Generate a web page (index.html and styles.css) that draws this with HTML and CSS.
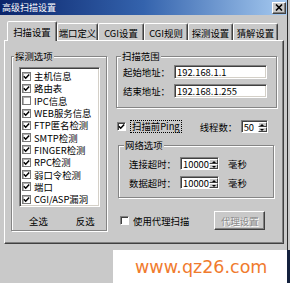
FILE: index.html
```html
<!DOCTYPE html>
<html lang="zh-CN">
<head>
<meta charset="utf-8">
<title>高级扫描设置</title>
<link rel="stylesheet" href="styles.css">
</head>
<body>
<div class="window">
  <div class="titlebar">
    <span class="title">高级扫描设置</span>
    <span class="close"><svg width="8" height="7" viewBox="0 0 8 7"><path d="M1 0.5 L7 6.5 M7 0.5 L1 6.5" stroke="#000" stroke-width="1.6" fill="none"/></svg></span>
  </div>
  <div class="tabs">
    <span class="tab active t1">扫描设置</span>
    <span class="tab t2">端口定义</span>
    <span class="tab t3">CGI设置</span>
    <span class="tab t4">CGI规则</span>
    <span class="tab t5">探测设置</span>
    <span class="tab t6">猜解设置</span>
  </div>
  <div class="panel">
    <div class="group probe">
      <span class="legend">探测选项</span>
      <div class="list">
        <div class="item"><span class="cb"><svg viewBox="0 0 7 7" width="7" height="7"><path d="M0.8 3.2 L2.7 5.2 L6.2 1.4" fill="none" stroke="#000" stroke-width="1.5"/></svg></span><span class="lb">主机信息</span></div>
        <div class="item"><span class="cb"><svg viewBox="0 0 7 7" width="7" height="7"><path d="M0.8 3.2 L2.7 5.2 L6.2 1.4" fill="none" stroke="#000" stroke-width="1.5"/></svg></span><span class="lb">路由表</span></div>
        <div class="item"><span class="cb"></span><span class="lb">IPC信息</span></div>
        <div class="item"><span class="cb"><svg viewBox="0 0 7 7" width="7" height="7"><path d="M0.8 3.2 L2.7 5.2 L6.2 1.4" fill="none" stroke="#000" stroke-width="1.5"/></svg></span><span class="lb">WEB服务信息</span></div>
        <div class="item"><span class="cb"><svg viewBox="0 0 7 7" width="7" height="7"><path d="M0.8 3.2 L2.7 5.2 L6.2 1.4" fill="none" stroke="#000" stroke-width="1.5"/></svg></span><span class="lb">FTP匿名检测</span></div>
        <div class="item"><span class="cb"><svg viewBox="0 0 7 7" width="7" height="7"><path d="M0.8 3.2 L2.7 5.2 L6.2 1.4" fill="none" stroke="#000" stroke-width="1.5"/></svg></span><span class="lb">SMTP检测</span></div>
        <div class="item"><span class="cb"><svg viewBox="0 0 7 7" width="7" height="7"><path d="M0.8 3.2 L2.7 5.2 L6.2 1.4" fill="none" stroke="#000" stroke-width="1.5"/></svg></span><span class="lb">FINGER检测</span></div>
        <div class="item"><span class="cb"><svg viewBox="0 0 7 7" width="7" height="7"><path d="M0.8 3.2 L2.7 5.2 L6.2 1.4" fill="none" stroke="#000" stroke-width="1.5"/></svg></span><span class="lb">RPC检测</span></div>
        <div class="item"><span class="cb"><svg viewBox="0 0 7 7" width="7" height="7"><path d="M0.8 3.2 L2.7 5.2 L6.2 1.4" fill="none" stroke="#000" stroke-width="1.5"/></svg></span><span class="lb">弱口令检测</span></div>
        <div class="item"><span class="cb"><svg viewBox="0 0 7 7" width="7" height="7"><path d="M0.8 3.2 L2.7 5.2 L6.2 1.4" fill="none" stroke="#000" stroke-width="1.5"/></svg></span><span class="lb">端口</span></div>
        <div class="item"><span class="cb"><svg viewBox="0 0 7 7" width="7" height="7"><path d="M0.8 3.2 L2.7 5.2 L6.2 1.4" fill="none" stroke="#000" stroke-width="1.5"/></svg></span><span class="lb">CGI/ASP漏洞</span></div>
      </div>
      <div class="sel"><span>全选</span><span>反选</span></div>
    </div>
    <div class="right">
      <div class="group range">
        <span class="legend">扫描范围</span>
        <div class="field first"><span class="lbl">起始地址：</span><span class="input">192.168.1.1</span></div>
        <div class="field second"><span class="lbl">结束地址：</span><span class="input">192.168.1.255</span></div>
      </div>
      <div class="ping">
        <span class="cb light"><svg viewBox="0 0 7 7" width="7" height="7"><path d="M0.8 3.2 L2.7 5.2 L6.2 1.4" fill="none" stroke="#000" stroke-width="1.5"/></svg></span>
        <span class="focus">扫描前Ping</span>
        <span class="threads">线程数：</span>
        <span class="spin w27"><span class="val">50</span><span class="spinbtn"><i class="up"></i><i class="dn"></i></span></span>
      </div>
      <div class="group net">
        <span class="legend">网络选项</span>
        <div class="nrow first"><span class="lbl">连接超时：</span><span class="spin w39"><span class="val">10000</span><span class="spinbtn"><i class="up"></i><i class="dn"></i></span></span><span class="unit">毫秒</span></div>
        <div class="nrow second"><span class="lbl">数据超时：</span><span class="spin w39"><span class="val">10000</span><span class="spinbtn"><i class="up"></i><i class="dn"></i></span></span><span class="unit">毫秒</span></div>
      </div>
      <div class="proxy">
        <span class="cb light"></span>
        <span class="plbl">使用代理扫描</span>
        <span class="btn">代理设置</span>
      </div>
    </div>
  </div>
</div>
<div class="footer">
  <div class="fgap"></div>
  <div class="wm">www.qz26.com</div>
  <div class="strip"></div>
</div>
</body>
</html>
```
FILE: styles.css
```css
* { box-sizing: border-box; margin: 0; padding: 0; }
html, body { width: 290px; height: 283px; overflow: hidden; }
body {
  background: #c9c9c9;
  font-family: "Noto Sans CJK SC", "Noto Sans", sans-serif;
  font-size: 9.4px;
  line-height: 12px;
  color: #000;
  display: flex;
  flex-direction: column;
}
.window {
  height: 250px;
  width: 288px;
  flex: none;
  border-right: 1px solid #2a2a2a;
  display: flex;
  flex-direction: column;
}
.titlebar {
  height: 15px;
  flex: none;
  display: flex;
  align-items: center;
  justify-content: space-between;
  padding: 0 1px 0 2px;
  background: linear-gradient(90deg, #0a246a 0%, #3463ad 50%, #a6caf0 100%);
  color: #fff;
  font-size: 9px;
}
.close {
  width: 14px;
  height: 12px;
  background: #c9c9c9;
  border: 1px solid;
  border-color: #fff #404040 #404040 #fff;
  box-shadow: inset -1px -1px #808080;
  display: flex;
  align-items: center;
  justify-content: center;
}
.tabs {
  display: flex;
  align-items: flex-end;
  height: 19px;
  margin-top: 6px;
  padding-left: 7px;
  flex: none;
}
.tab {
  height: 17px;
  display: flex;
  align-items: center;
  justify-content: center;
  padding-top: 2px;
  border: 1px solid;
  border-bottom: none;
  border-color: #fff #404040 transparent #fff;
  box-shadow: inset -1px 0 #808080;
  border-radius: 2px 2px 0 0;
  white-space: nowrap;
}
.tab.active {
  height: 20px;
  margin-bottom: -1px;
  padding-top: 0;
  background: #c9c9c9;
  position: relative;
  z-index: 1;
}
.t1 { width: 50px; }
.t2 { width: 41px; }
.t3 { width: 46px; }
.t4 { width: 44px; }
.t5 { width: 45px; }
.t6 { width: 45px; }
.panel {
  height: 204px;
  width: 280px;
  margin-left: 4px;
  flex: none;
  border-top: 1px solid #fff;
  border-left: 1px solid #fff;
  border-right: 1px solid #404040;
  border-bottom: 1px solid #404040;
  box-shadow: inset -1px -1px #808080;
  display: flex;
  align-items: flex-start;
  padding: 15px 0 0 6px;
}
.group {
  border: 1px solid #858585;
  box-shadow: inset 1px 1px #fff, 1px 1px #fff;
  display: flex;
  flex-direction: column;
  flex: none;
}
.legend {
  align-self: flex-start;
  margin: -7px 0 0 2px;
  padding: 0 1px;
  background: #c9c9c9;
  line-height: 12px;
}
.probe { width: 96px; height: 175px; }
.list {
  margin: 5px 0 0 7px;
  width: 81px;
  height: 140px;
  background: #fff;
  border: 1px solid;
  border-color: #808080 #fff #fff #808080;
  box-shadow: inset 1px 1px #404040, inset -1px -1px #d4d0c8;
  padding: 2px 0 0 2px;
}
.item {
  height: 12.3px;
  display: flex;
  align-items: center;
  white-space: nowrap;
}
.cb {
  width: 9px;
  height: 9px;
  flex: none;
  background: #fff;
  border: 1px solid #7a7a7a;
  box-shadow: inset 1px 1px #b0b0b0;
  display: flex;
  align-items: center;
  justify-content: center;
}
.cb.light {
  border-color: #808080 #fff #fff #808080;
  box-shadow: inset 1px 1px #404040;
}
.item .lb { margin-left: 3px; }
.sel {
  display: flex;
  gap: 28px;
  margin: 8px 0 0 17px;
}
.right {
  margin-left: 9px;
  display: flex;
  flex-direction: column;
  align-items: flex-start;
}
.range { width: 161px; height: 52px; }
.range .legend { margin-left: 4px; }
.field {
  display: flex;
  align-items: center;
  height: 14px;
  margin-left: 6px;
}
.field.first { margin-top: 3px; }
.field.second { margin-top: 5px; }
.lbl { width: 51px; flex: none; white-space: nowrap; }
.input {
  width: 93px;
  height: 14px;
  background: #fff;
  border: 1px solid;
  border-color: #808080 #fff #fff #808080;
  box-shadow: inset 1px 1px #404040, inset -1px -1px #d4d0c8;
  padding-left: 2px;
  display: flex;
  align-items: center;
}
.ping {
  display: flex;
  align-items: center;
  height: 13px;
  margin-top: 12px;
}
.ping .cb { margin-left: 1px; }
.focus {
  margin-left: 4px;
  border: 1px dotted #000;
  padding: 0 1px;
  line-height: 11px;
  white-space: nowrap;
}
.threads { margin-left: 18px; width: 41px; white-space: nowrap; }
.spin {
  display: flex;
  height: 13px;
  background: #fff;
  border: 1px solid;
  border-color: #808080 #fff #fff #808080;
  box-shadow: inset 1px 1px #404040;
  flex: none;
}
.w27 { width: 27px; }
.w39 { width: 39px; }
.val {
  flex: 1;
  padding: 1px 0 0 2px;
  line-height: 10px;
}
.spinbtn {
  width: 9px;
  margin: 1px 0 0 0;
  display: flex;
  flex-direction: column;
  background: #c9c9c9;
}
.spinbtn i {
  flex: 1;
  display: flex;
  align-items: center;
  justify-content: center;
  border: 1px solid;
  border-color: #fff #404040 #404040 #fff;
}
.spinbtn .up::after {
  content: "";
  border-left: 2px solid transparent;
  border-right: 2px solid transparent;
  border-bottom: 2px solid #000;
}
.spinbtn .dn::after {
  content: "";
  border-left: 2px solid transparent;
  border-right: 2px solid transparent;
  border-top: 2px solid #000;
}
.net { width: 156px; height: 53px; margin: 12px 0 0 2px; }
.net .legend { margin-left: 5px; }
.nrow {
  display: flex;
  align-items: center;
  height: 13px;
  margin-left: 10px;
}
.nrow.first { margin-top: 6px; }
.nrow.second { margin-top: 6px; }
.unit { margin-left: 9px; }
.proxy {
  display: flex;
  align-items: center;
  height: 19px;
  margin-top: 13px;
}
.proxy .cb { margin-left: 4px; }
.plbl { margin-left: 4px; white-space: nowrap; }
.btn {
  margin-left: 25px;
  width: 51px;
  height: 19px;
  border: 1px solid;
  border-color: #fff #404040 #404040 #fff;
  box-shadow: inset -1px -1px #808080;
  color: #8a8a8a;
  text-shadow: 1px 1px #fff;
  display: flex;
  align-items: center;
  justify-content: center;
}
.footer {
  height: 33px;
  flex: none;
  display: flex;
}
.fgap { width: 113px; flex: none; }
.wm {
  width: 174px;
  flex: none;
  background: #fff;
  color: #f07b2e;
  font-family: "DejaVu Sans", sans-serif;
  font-size: 17.5px;
  line-height: 20px;
  display: flex;
  align-items: center;
  padding: 1px 0 0 22px;
}
.strip { flex: 1; background: #14213d; }
```
